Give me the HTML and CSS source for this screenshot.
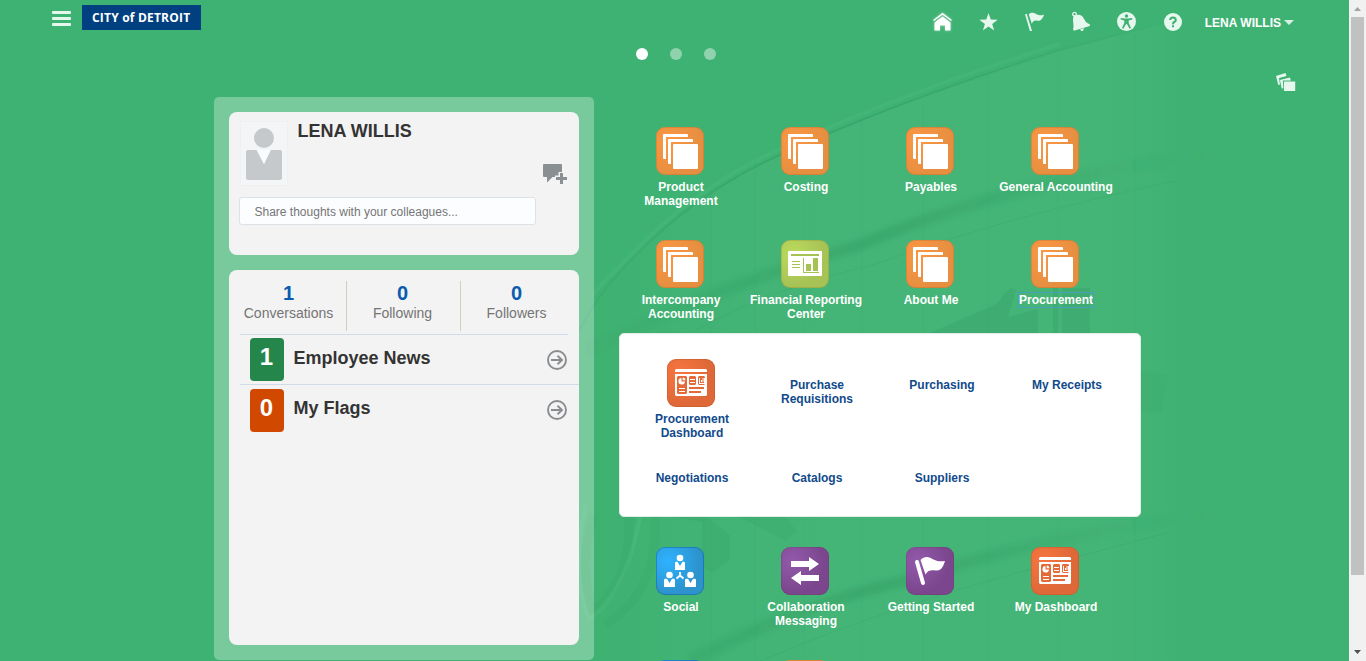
FILE: index.html
```
<!DOCTYPE html>
<html lang="en">
<head>
<meta charset="utf-8">
<title>Home</title>
<link rel="stylesheet" href="styles.css">
</head>
<body>
<svg class="defs" width="0" height="0" aria-hidden="true">
  <symbol id="sheets" viewBox="0 0 48 48"><path fill="#fff" d="M8 7h23a1 1 0 0 1 1 1v2H10v22H8a1 1 0 0 1-1-1V8a1 1 0 0 1 1-1zM13 12h23a1 1 0 0 1 1 1v2H15v22h-2a1 1 0 0 1-1-1V13a1 1 0 0 1 1-1z"/><rect x="17" y="17" width="25" height="25" rx="1" fill="#fff"/></symbol>
  <symbol id="report" viewBox="0 0 48 48"><rect x="7" y="11" width="34" height="25" rx="1" fill="#fff"/><path fill="#a6c252" d="M10 14h28v2H10zM11 21h8v1h-8zM11 24h8v1h-8zM11 27h8v1h-8zM22 18h1v14h15v1H22zM25 24h5v7h-5zM32 18h5v13h-5z"/></symbol>
  <symbol id="dash" viewBox="0 0 48 48"><path fill="#fff" d="M9 10h30l1 1v2H8v-2zM8 15h32v21l-1 1H9l-1-1z"/><path fill="#e46b37" d="M10 18l1-1h8l1 1v16l-1 1h-8l-1-1zM22 18l1-1h5l1 1v7l-1 1h-5l-1-1zM31 18l1-1h5l1 1v7l-1 1h-5l-1-1zM22 28h15v2H22zM22 32h12v2H22z"/><path fill="#fff" d="M12 29h6v1h-6zM12 32h6v1h-6zM23 20h5v1h-5zM23 23h5v1h-5zM32 19h1v5h4v-5h1v6h-6zM34 21h1v2h-1zM35.500 19h1v4h-1zM14.500 19v3.500H18a3.300 3.300 0 1 1-3.500-3.500zM15.700 18.500a2.800 2.800 0 0 1 2.700 2.700h-2.700z"/></symbol>
  <symbol id="social" viewBox="0 0 48 48"><g fill="#fff"><circle cx="24" cy="11" r="3.300"/><path d="M19 15.500l1-.8h1.500L24 19l2.500-4.300H28l1 .8V23H19z"/><circle cx="13.500" cy="28" r="3.300"/><path d="M8 32.500l1-.8h2l2.500 4.300 2.500-4.300h2l1 .8V40H8z"/><circle cx="34.500" cy="28" r="3.300"/><path d="M29 32.500l1-.8h2l2.500 4.300 2.500-4.300h2l1 .8V40H29z"/></g><path d="M24 25v3.500M20.500 31.500l3.500-3 3.500 3" stroke="#fff" stroke-width="1.800" fill="none"/></symbol>
  <symbol id="swap" viewBox="0 0 48 48"><path fill="#fff" d="M10 14h18v-4l10 7-10 7v-4H10zM38 28H20v-4l-10 7 10 7v-4h18z"/></symbol>
  <symbol id="banner" viewBox="0 0 48 48"><path d="M11 15l6 21" stroke="#fff" stroke-width="4" stroke-linecap="round"/><path fill="#fff" d="M14.500 13c4-4 8-3.500 12-1 4 2.500 8 2.500 12.500 2-1.500 5-3.500 10-9 9.500-5-.5-8-.5-10.500 4z"/></symbol>
  <symbol id="go" viewBox="0 0 20 20"><g fill="none" stroke="#8a8d90" stroke-width="1.900"><circle cx="10" cy="10" r="9"/><path d="M4 10h11M10.500 5.700L15 10l-4.500 4.300"/></g></symbol>
</svg>
<div class="page">
  <div class="screen">
    <svg class="backdrop" width="1349" height="661" viewBox="0 0 1349 661" aria-hidden="true">
      <defs>
        <linearGradient id="fade" x1="580" x2="1200" y1="0" y2="0" gradientUnits="userSpaceOnUse"><stop offset="0" stop-color="#fff" stop-opacity="0"/><stop offset=".4" stop-color="#fff" stop-opacity=".035"/><stop offset=".85" stop-color="#fff" stop-opacity=".035"/><stop offset="1" stop-color="#fff" stop-opacity="0"/></linearGradient>
        <linearGradient id="edge" x1="580" x2="1170" y1="0" y2="0" gradientUnits="userSpaceOnUse"><stop offset="0" stop-color="#359f66" stop-opacity=".3"/><stop offset=".4" stop-color="#359f66" stop-opacity=".7"/><stop offset=".7" stop-color="#359f66" stop-opacity=".5"/><stop offset="1" stop-color="#359f66" stop-opacity="0"/></linearGradient>
        <linearGradient id="band" x1="600" x2="1210" y1="0" y2="0" gradientUnits="userSpaceOnUse"><stop offset="0" stop-color="#2a955a" stop-opacity=".1"/><stop offset=".45" stop-color="#2a955a" stop-opacity=".36"/><stop offset="1" stop-color="#2a955a" stop-opacity="0"/></linearGradient>
        <filter id="soft" x="-10%" y="-10%" width="120%" height="120%"><feGaussianBlur stdDeviation="2.500"/></filter>
      </defs>
      <path fill="url(#fade)" d="M580 330Q600 290 620 272Q690 195 780 155Q900 100 1060 50L1200 15V661H590z"/>
      <path fill="none" stroke="url(#edge)" stroke-width="2" d="M575 340Q590 305 620 272Q690 195 780 155Q900 100 1060 50L1155 25"/>
      <path fill="none" stroke="#5cc48a" stroke-opacity=".2" stroke-width="4" d="M590 298Q600 285 620 266Q690 189 780 149Q900 94 1060 44"/>
      <g fill="none" stroke="url(#band)" filter="url(#soft)">
        <path stroke-width="12" d="M590 350Q720 285 860 245Q1000 185 1200 155"/>
        <path stroke-width="12" d="M690 661Q800 605 900 582Q1050 535 1200 515"/>
      </g>
      <g fill="none" stroke="#2f995f" stroke-opacity=".2">
        <path d="M670 345Q760 290 870 266Q1010 215 1180 180M760 661Q880 610 1010 575L1170 532"/>
        <path stroke-opacity=".1" d="M711 190v470M755 160v500M804 140v520M862 120v541M923 100v561M988 75v586M1058 50v611M1135 35v626"/>
      </g>
      <g fill="#2f995f" fill-opacity=".25">
        <path d="M930 333l55-24q15-5 18-14l8-7 5 2-8 27 30-8v24zM1053 288h5v45h-5zM1062 288h28v45h-28z"/>
        <path fill-opacity=".17" d="M672 517h34l24 18v25l-18 12-10-6v-44zM740 517h45l12 14-11 10-17-9z"/>
        <path fill-opacity=".1" d="M1141 370l27 5-6 38-21-3z"/>
      </g>
      <g fill="none" stroke="#2f995f" stroke-opacity=".16">
        <path stroke-width="9" d="M627 500Q638 575 592 612Q578 560 594 515M655 517Q660 590 605 625"/>
        <path stroke="#6fd09b" stroke-opacity=".17" stroke-width="4" d="M586 505Q570 570 589 619Q625 595 640 517"/>
      </g>
    </svg>
    <header class="topbar">
      <svg class="burger" width="19" height="15" viewBox="0 0 19 15"><g fill="#e6f7ee"><rect width="19" height="3" rx="1"/><rect y="6" width="19" height="3" rx="1"/><rect y="12" width="19" height="3" rx="1"/></g></svg>
      <div class="brand">CITY of DETROIT</div>
      <nav class="tools">
        <svg class="home" width="20" height="20" viewBox="0 0 20 20"><path fill="#fff" d="M2.500 11.500L10.500 5.500l8 6V19.500h-5.500v-5h-5v5H2.500z"/><path fill="none" stroke="#fff" stroke-width="1.500" d="M1.500 9.500L10.500 2.800l9 6.700"/></svg>
        <svg width="20" height="20" viewBox="0 0 20 20"><path fill="#e6f7ee" d="M10.500 2l2.300 6.500 6.900.2-5.500 4.200 2 6.600-5.700-3.900L4.900 19.500l2-6.600L1.300 8.700l7-.2z"/></svg>
        <svg width="20" height="20" viewBox="0 0 20 20"><g fill="#e6f7ee"><path d="M1 3.200l1.700-.5L8 19.700l-2 .6z"/><path d="M4.700 3.200C7.500 1 10 1.700 12.500 3.200c2.500 1.500 4.500 1.500 7.500.2-1 4-3.500 7-6.500 6.300-2.500-.6-4.300-.5-5.700 3z"/></g></svg>
        <svg width="20" height="20" viewBox="0 0 20 20"><path fill="#e6f7ee" d="M3.500 5.500C6 3.500 10 3 12.500 5.500c2 2.500 2.500 6 7.300 7.700v1.800L4 19.800l-1-1.500C4.500 14.500 2 9 3.500 5.500z"/><circle cx="4.500" cy="3.200" r="1.800" fill="none" stroke="#e6f7ee" stroke-width="1.300"/><path fill="#e6f7ee" d="M10 18.500l4-1.200q-.5 3-2.500 3z"/></svg>
        <svg width="20" height="20" viewBox="0 0 20 20"><circle cx="10.500" cy="10.500" r="9.500" fill="#e6f7ee"/><circle cx="10.500" cy="5" r="1.700" fill="#3fb173"/><path fill="#3fb173" d="M4.700 7l4 .6h3.600l4-.6v1.500l-3.600 1v2.500l2.300 5-1.400.7-2.700-4.700h-.8l-2.700 4.700-1.400-.7 2.300-5V9.500l-3.600-1z"/></svg>
        <svg width="20" height="20" viewBox="0 0 20 20"><circle cx="11" cy="11" r="9" fill="#e6f7ee"/><path fill="none" stroke="#3fb173" stroke-width="2" d="M8.200 9q0-2.500 2.800-2.500T13.800 9q0 1.300-1.500 2T11 13.300"/><path fill="#3fb173" d="M10 14.300h2v2h-2z"/></svg>
        <div class="account">LENA WILLIS<svg width="10" height="5" viewBox="0 0 10 5"><path fill="#d5f0e1" d="M0 0h10L5 5z"/></svg></div>
      </nav>
    </header>
    <div class="dots"><i class="dot on"></i><i class="dot"></i><i class="dot"></i></div>
    <div class="switcher"><svg width="20" height="20" viewBox="0 0 20 20"><path fill="#e6f7ee" d="M0 4L9.500 1l1 3L3 6l1 6.500-1.700.5zM4 8l10-2.500.8 3H6.800l.6 7.700-1.700.3z"/><path fill="#e6f7ee" d="M8 9.500h11.200v9.500H8z"/></svg></div>
    <main class="content">
      <aside class="side">
        <section class="card profile">
          <div class="who">
            <svg class="avatar" width="48" height="65" viewBox="0 0 48 65"><rect x=".5" y=".5" width="47" height="64" fill="#f4f5f6" stroke="#eef0f2"/><circle cx="24" cy="17" r="10" fill="#c6c9cc"/><path fill="#c6c9cc" d="M6 31q0-2 2-2h8.500L24 43l7-14h9q2 0 2 2v26q0 2-2 2H8q-2 0-2-2z"/><path fill="#fafbfc" d="M17 29h13l-6 14z"/></svg>
            <h1 class="name">LENA WILLIS</h1>
            <svg class="post" width="24" height="20" viewBox="0 0 24 20"><path fill="#8a8f92" d="M1 0h17q1 0 1 1v7h-3.500v3.500H12V13H9.500L4 18.500V13H1q-1 0-1-1V1q0-1 1-1zM17 9h3v4h4v3h-4v4h-3v-4h-4v-3h4z"/></svg>
          </div>
          <div class="share">Share thoughts with your colleagues...</div>
        </section>
        <section class="card activity">
          <div class="stats">
            <div class="stat"><b>1</b><span>Conversations</span></div>
            <div class="stat"><b>0</b><span>Following</span></div>
            <div class="stat"><b>0</b><span>Followers</span></div>
          </div>
          <div class="feed"><span class="count">1</span><span class="title">Employee News</span><svg class="go" width="20" height="20"><use href="#go"/></svg></div>
          <div class="feed second"><span class="count flags">0</span><span class="title">My Flags</span><svg class="go" width="20" height="20"><use href="#go"/></svg></div>
        </section>
      </aside>
      <div class="springboard">
        <div class="tiles">
          <a class="tile"><svg class="icon orange"><use href="#sheets"/></svg><span class="label">Product Management</span></a>
          <a class="tile"><svg class="icon orange"><use href="#sheets"/></svg><span class="label">Costing</span></a>
          <a class="tile"><svg class="icon orange"><use href="#sheets"/></svg><span class="label">Payables</span></a>
          <a class="tile"><svg class="icon orange"><use href="#sheets"/></svg><span class="label">General Accounting</span></a>
          <a class="tile"><svg class="icon orange"><use href="#sheets"/></svg><span class="label">Intercompany Accounting</span></a>
          <a class="tile"><svg class="icon lime"><use href="#report"/></svg><span class="label">Financial Reporting Center</span></a>
          <a class="tile"><svg class="icon orange"><use href="#sheets"/></svg><span class="label">About Me</span></a>
          <a class="tile"><svg class="icon orange"><use href="#sheets"/></svg><span class="label"><span class="focused">Procurement</span></span></a>
        </div>
        <div class="drawer">
          <a class="tile"><svg class="icon red"><use href="#dash"/></svg><span class="label">Procurement Dashboard</span></a>
          <a class="tile plain"><span class="label">Purchase Requisitions</span></a>
          <a class="tile plain"><span class="label">Purchasing</span></a>
          <a class="tile plain"><span class="label">My Receipts</span></a>
          <a class="tile plain"><span class="label">Negotiations</span></a>
          <a class="tile plain"><span class="label">Catalogs</span></a>
          <a class="tile plain"><span class="label">Suppliers</span></a>
        </div>
        <div class="tiles">
          <a class="tile"><svg class="icon blue"><use href="#social"/></svg><span class="label">Social</span></a>
          <a class="tile"><svg class="icon purple"><use href="#swap"/></svg><span class="label">Collaboration Messaging</span></a>
          <a class="tile"><svg class="icon purple"><use href="#banner"/></svg><span class="label">Getting Started</span></a>
          <a class="tile"><svg class="icon red"><use href="#dash"/></svg><span class="label">My Dashboard</span></a>
          <a class="tile"><svg class="icon blue"></svg></a>
          <a class="tile"><svg class="icon orange"></svg></a>
        </div>
      </div>
    </main>
  </div>
  <div class="scrollbar">
    <svg width="17" height="17" viewBox="0 0 17 17"><path fill="#a3a3a3" d="M5 11l3.500-4 3.500 4z"/></svg>
    <div class="thumb"></div>
    <svg width="17" height="17" viewBox="0 0 17 17"><path fill="#505050" d="M5 6h7l-3.500 4z"/></svg>
  </div>
</div>
</body>
</html>
```
FILE: styles.css
```
* { box-sizing: border-box; }
body { margin: 0; font-family: "Liberation Sans", Arial, sans-serif; overflow: hidden; }
svg { display: block; flex: none; }
.defs { position: absolute; }
.page { display: flex; width: 1366px; height: 661px; overflow: hidden; }
.screen { position: relative; width: 1349px; height: 661px; overflow: hidden; background: #3eb272; isolation: isolate; }
.backdrop { position: absolute; inset: 0; z-index: -1; }

.topbar { display: flex; align-items: flex-start; height: 48px; padding-left: 52px; }
.burger { margin-top: 11px; }
.brand { width: 119px; height: 25px; margin: 5px 0 0 11px; padding-left: 10px; background: #004080; color: #fff; font: bold 12px/25px "Open Sans", "Noto Sans", sans-serif; letter-spacing: .2px; white-space: nowrap; }
.tools { display: flex; gap: 26px; margin: 11px 55px 0 auto; }
.home { filter: drop-shadow(0 0 1.500px rgba(255,255,255,.45)); }
.account { display: flex; align-items: center; gap: 3px; height: 23px; margin-left: -3px; color: #fff; font-size: 12px; font-weight: bold; white-space: nowrap; }

.dots { display: flex; gap: 22px; padding-left: 636px; height: 24px; }
.dot { width: 12px; height: 12px; border-radius: 50%; background: rgba(255,255,255,.42); }
.dot.on { background: #fff; }
.switcher { display: flex; justify-content: flex-end; height: 25px; padding-right: 53px; }

.content { display: flex; padding-left: 214px; }
.side { display: flex; flex-direction: column; gap: 15px; width: 380px; height: 563px; padding: 15px; border-radius: 5px; background: rgba(255,255,255,.3); }
.card { border-radius: 8px; background: #f3f3f3; }
.profile { height: 143px; padding: 9px 12px 0 10px; }
.who { display: flex; height: 76px; }
.avatar { margin-left: 1px; }
.name { margin: 0 0 0 9.500px; color: #333; font-size: 18px; line-height: 20px; }
.post { margin: 43px 0 0 auto; }
.share { width: 297px; height: 28px; padding-left: 14.500px; border: 1px solid #dce2e6; border-radius: 3px; background: #fcfdff; color: #757575; font-size: 12px; line-height: 28px; }

.activity { height: 375px; padding: 11px 0 0 11px; }
.stats { display: flex; width: 328px; height: 54px; border-bottom: 1px solid #d0dde8; }
.stat { display: flex; flex-direction: column; align-items: center; width: 114px; height: 50px; padding-right: 2px; border-left: 1px solid #cfcfc0; color: #757575; font-size: 14px; }
.stat:first-child { width: 106px; border-left: 0; padding-right: 9px; }
.stat:last-child { width: 108px; padding: 0 0 0 4px; }
.stat b { margin-top: 1px; color: #0a5bb0; font-size: 20px; line-height: 23px; }
.stat span { line-height: 16px; }
.feed { display: flex; height: 50px; padding: 3px 12px 0 10px; border-bottom: 1px solid #d0dde8; }
.feed.second { padding-top: 4px; border-bottom: 0; }
.count { width: 34px; height: 43px; padding-right: 1px; border-radius: 4px; background: #25864c; color: #fff; font-size: 24px; font-weight: bold; line-height: 38px; text-align: center; }
.count.flags { background: #d14900; }
.title { margin-left: 9.500px; color: #333; font-size: 18px; font-weight: bold; line-height: 40px; }
.second .title { line-height: 38px; }
.go { margin: 12px 0 0 auto; }
.second .go { margin-top: 11px; }

.springboard { padding: 30px 0 0 24px; }
.tiles { display: grid; grid-template-columns: repeat(4, 125px); grid-auto-rows: 113px; }
.tile { display: flex; flex-direction: column; gap: 5px; }
.icon { width: 48px; height: 48px; margin-left: 38px; border-radius: 9px; box-shadow: inset 0 0 0 1px rgba(80,40,0,.12); }
.orange { background: radial-gradient(circle at 25% 30%, #fb9743, #e78f41 65%); }
.lime { background: radial-gradient(circle at 25% 30%, #bcda5c, #a7c255 65%); }
.red { background: radial-gradient(circle at 25% 30%, #f8753f, #de6838 65%); }
.blue { background: radial-gradient(circle at 25% 30%, #2fb2ff, #2c93cd 65%); box-shadow: inset 0 0 0 1px rgba(0,60,120,.3); }
.purple { background: radial-gradient(circle at 25% 30%, #9259ab, #7b468d 65%); }
.label { padding: 0 3px 0 4px; color: #fff; font-size: 12px; font-weight: bold; line-height: 14px; text-align: center; }
.focused { display: inline-block; outline: 1px solid #4a9fbd; }
.drawer { display: grid; grid-template-columns: repeat(4, 125px); grid-auto-rows: 93px; width: 522px; height: 184px; margin: -20px 0 30px 1px; padding: 25px 0 0 9px; border: 1px solid #e4ece7; border-radius: 5px; background: #fff; }
.drawer .label { color: #114a8b; }
.plain { padding-top: 19px; }
.plain .label { padding: 0 16px 0 17px; }

.scrollbar { display: flex; flex-direction: column; width: 17px; height: 661px; background: #f1f1f1; }
.thumb { width: 13px; height: 558px; margin: 0 2px 69px; background: #c1c1c1; }
```
